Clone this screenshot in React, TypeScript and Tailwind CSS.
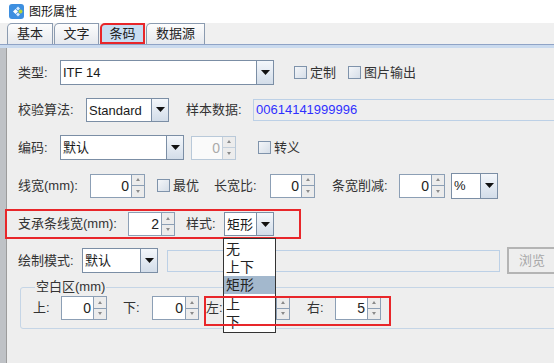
import React from "react";

const font = "font-['Liberation_Sans','Noto_Sans_CJK_SC',sans-serif]";

function Arrow() {
  return (
    <svg width="9" height="5" viewBox="0 0 9 5">
      <path d="M0 0h9L4.5 5z" fill="#111" />
    </svg>
  );
}

function Combo({ w, h = "h-[25px]", text }: { w: string; h?: string; text: string }) {
  return (
    <div className={`${w} ${h} flex border border-[#7b8ea5] bg-white`}>
      <div className="flex-1 overflow-hidden whitespace-nowrap pl-[2px] text-[13px] leading-[23px] text-[#1a1a1a]">
        {text}
      </div>
      <div className="flex w-[17px] items-center justify-center border-l border-[#7b8ea5] bg-gradient-to-b from-[#f4f7fb] to-[#d3dde9]">
        <Arrow />
      </div>
    </div>
  );
}

function Tiny({ up }: { up?: boolean }) {
  return (
    <svg width="4" height="3" viewBox="0 0 4 3">
      <path d={up ? "M0 3h4L2 0z" : "M0 0h4L2 3z"} fill="#8a8a8a" />
    </svg>
  );
}

function Spinner({ w, value, disabled }: { w: string; value: string; disabled?: boolean }) {
  return (
    <div
      className={`${w} flex h-[24px] border ${disabled ? "border-[#b9c9d9]" : "border-[#8c9fb5]"}`}
    >
      <div
        className={`flex-1 pr-[2px] text-right text-[14px] leading-[22px] ${
          disabled ? "bg-[#fafafa] text-[#aaaaaa]" : "bg-white text-[#222]"
        }`}
      >
        {value}
      </div>
      <div
        className={`flex w-[13px] flex-col border-l bg-[#ececec] ${
          disabled ? "border-[#c4d0dc]" : "border-[#8c9fb5]"
        }`}
      >
        <div className={`flex flex-1 items-center justify-center border-b ${disabled ? "border-[#c4d0dc]" : "border-[#8c9fb5]"}`}>
          <Tiny up />
        </div>
        <div className="flex flex-1 items-center justify-center">
          <Tiny />
        </div>
      </div>
    </div>
  );
}

function Check({ label, className = "" }: { label: string; className?: string }) {
  return (
    <div className={`flex items-center gap-[3px] ${className}`}>
      <div className="h-[13px] w-[13px] border border-[#7f93ab] bg-gradient-to-br from-[#f4f6f9] to-[#d6dee8]" />
      <span className="text-[13px] text-[#333]">{label}</span>
    </div>
  );
}

function Label({ w, text, className = "" }: { w: string; text: string; className?: string }) {
  return <span className={`${w} shrink-0 whitespace-nowrap text-[13px] text-[#333] ${className}`}>{text}</span>;
}

function Tab({ text, w, active }: { text: string; w: string; active?: boolean }) {
  return (
    <div
      className={`${w} flex h-[21px] shrink-0 items-center justify-center rounded-tl-[5px] border text-[13px] text-[#222] ${
        active
          ? "border-2 border-[#e8262a] bg-[#c8ddf2]"
          : "border-[#8b9bb0] border-b-0 bg-gradient-to-b from-[#fdfdfd] to-[#e6e9ee]"
      }`}
    >
      {text}
    </div>
  );
}

export default function App() {
  return (
    <div className={`relative flex h-[363px] w-[554px] flex-col overflow-hidden bg-[#eeeeee] ${font}`}>
      {/* title bar */}
      <div className="flex h-[23px] items-center gap-[5px] bg-white pl-[9px]">
        <svg width="15" height="15" viewBox="0 0 15 15">
          <rect width="15" height="15" rx="3" fill="#3d8fe0" />
          <path d="M4 7.5l2.5-2.5 2.5 2.5-2.5 2.5z" fill="#fff" />
          <path d="M7 4.5l2-2 2 2-2 2z" fill="#d8ecff" />
          <path d="M7 10.5l2-2 2 2-2 2z" fill="#d8ecff" />
          <circle cx="11.5" cy="7.5" r="2" fill="#b6d43a" />
        </svg>
        <span className="text-[12px] text-[#111]">图形属性</span>
      </div>

      {/* tabs */}
      <div className="flex h-[21px] items-end gap-[1px] bg-[#f0f0f0] pl-[7px]">
        <Tab text="基本" w="w-[46px]" />
        <Tab text="文字" w="w-[45px]" />
        <Tab text="条码" w="w-[45px]" active />
        <Tab text="数据源" w="w-[59px]" />
      </div>
      <div className="h-[4px] border-t border-[#8fa3c6] bg-[#cadaee]" />

      <div className="flex flex-1">
        <div className="w-[7px] shrink-0 border-r border-[#9c9c9c] bg-[#bfc2c6]" />
        <div className="flex flex-1 flex-col pl-[11px] pt-[12px]">
          {/* 类型 */}
          <div className="flex h-[25px] items-center">
            <Label w="w-[42px]" text="类型:" />
            <Combo w="w-[214px]" text="ITF 14" />
            <Check label="定制" className="ml-[20px]" />
            <Check label="图片输出" className="ml-[12px]" />
          </div>

          {/* 校验算法 */}
          <div className="mt-[12px] flex h-[25px] items-center">
            <Label w="w-[68px]" text="校验算法:" />
            <Combo w="w-[83px]" h="h-[24px]" text="Standard" />
            <Label w="w-[67px]" text="样本数据:" className="ml-[17px]" />
            <div className="h-[22px] w-[320px] shrink-0 border-y border-l border-[#bcd0e6] pl-[2px] text-[13px] leading-[20px] text-[#3030ff]">
              00614141999996
            </div>
          </div>

          {/* 编码 */}
          <div className="mt-[13px] flex h-[25px] items-center">
            <Label w="w-[42px]" text="编码:" />
            <Combo w="w-[124px]" text="默认" />
            <div className="ml-[7px]">
              <Spinner w="w-[45px]" value="0" disabled />
            </div>
            <Check label="转义" className="ml-[22px]" />
          </div>

          {/* 线宽 */}
          <div className="mt-[13px] flex h-[25px] items-center">
            <Label w="w-[72px]" text="线宽(mm):" />
            <Spinner w="w-[55px]" value="0" />
            <Check label="最优" className="ml-[12px]" />
            <Label w="w-[56px]" text="长宽比:" className="ml-[15px]" />
            <Spinner w="w-[45px]" value="0" />
            <Label w="w-[67px]" text="条宽削减:" className="ml-[17px]" />
            <Spinner w="w-[46px]" value="0" />
            <div className="ml-[6px]">
              <Combo w="w-[47px]" h="h-[26px]" text="%" />
            </div>
          </div>

          {/* 支承条线宽 (marked) */}
          <div className="-ml-[13px] mt-[11px] flex h-[30px] w-[296px] items-center border-2 border-[#e8262a] pl-[11px]">
            <Label w="w-[110px]" text="支承条线宽(mm):" />
            <Spinner w="w-[47px]" value="2" />
            <Label w="w-[38px]" text="样式:" className="ml-[11px]" />
            <Combo w="w-[50px]" h="h-[24px]" text="矩形" />
          </div>

          {/* 绘制模式 */}
          <div className="mt-[9px] flex h-[25px] items-center">
            <Label w="w-[64px]" text="绘制模式:" />
            <Combo w="w-[76px]" text="默认" />
            <div className="ml-[9px] h-[22px] w-[333px] shrink-0 border border-[#bcd0e6]" />
            <div className="ml-[7px] flex h-[27px] w-[50px] shrink-0 items-center justify-center border-2 border-[#b4b4b4] text-[13px] text-[#a8a8a8]">
              浏览
            </div>
          </div>

          {/* 空白区 */}
          <fieldset className="ml-[2px] mt-[6px] h-[50px] w-[560px] rounded-[3px] border border-[#c5d5e6] pl-[12px]">
            <legend className="ml-[2px] px-[1px] text-[13px] leading-[16px] text-[#333]">空白区(mm)</legend>
            <div className="mt-[1px] flex h-[24px] items-center">
              <Label w="w-[28px]" text="上:" />
              <Spinner w="w-[46px]" value="0" />
              <Label w="w-[29px]" text="下:" className="ml-[16px]" />
              <Spinner w="w-[47px]" value="0" />
              <Label w="w-[28px]" text="左:" className="ml-[7px]" />
              <Spinner w="w-[56px]" value="0" />
              <Label w="w-[28px]" text="右:" className="ml-[17px]" />
              <Spinner w="w-[46px]" value="5" />
            </div>
          </fieldset>
        </div>
      </div>

      {/* open style dropdown */}
      <div className="absolute left-[223px] top-[238px] flex h-[95px] w-[53px] flex-col border border-[#333] bg-white pt-[1px] text-[14px] text-[#222]">
        <div className="h-[18px] pl-[2px] leading-[18px]">无</div>
        <div className="h-[18px] pl-[2px] leading-[18px]">上下</div>
        <div className="h-[18px] bg-[#a3b8cd] pl-[2px] leading-[18px]">矩形</div>
        <div className="mt-[1px] h-[18px] pl-[2px] leading-[18px]">上</div>
        <div className="h-[18px] pl-[2px] leading-[18px]">下</div>
      </div>

      {/* annotation box over 左/右 */}
      <div className="absolute left-[204px] top-[296px] h-[30px] w-[187px] border-2 border-[#e8262a]" />
    </div>
  );
}
